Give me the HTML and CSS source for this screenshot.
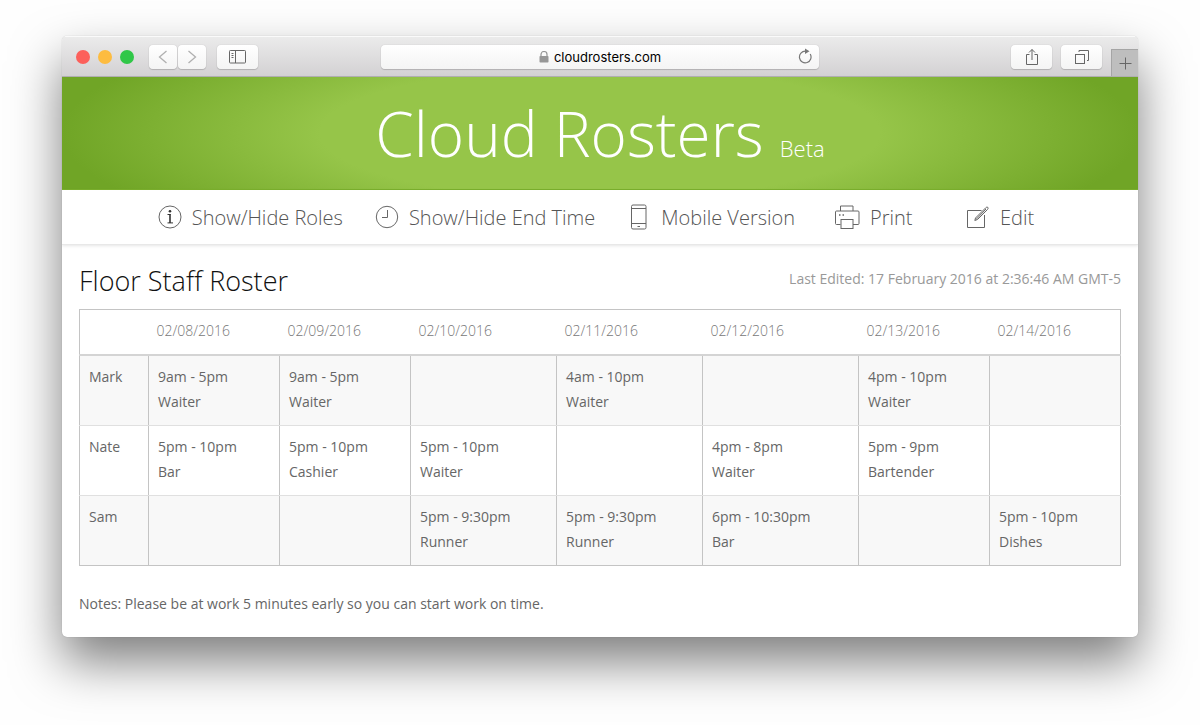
FILE: index.html
```html
<!DOCTYPE html>
<html lang="en">
<head>
<meta charset="utf-8">
<title>Cloud Rosters</title>
<link rel="stylesheet" href="styles.css">
</head>
<body>
<div class="window">
  <div class="toolbar">
    <div class="toolbar-side">
      <div class="lights">
        <span class="light light-close"></span>
        <span class="light light-min"></span>
        <span class="light light-max"></span>
      </div>
      <div class="history">
        <button class="tool tool-nav" type="button" aria-label="Back"><svg width="10" height="16" viewBox="0 0 10 16"><path d="M8.500 2L1.500 8L8.500 14" stroke="#b0b0b0" stroke-width="1.300"/></svg></button>
        <button class="tool tool-nav" type="button" aria-label="Forward"><svg width="10" height="16" viewBox="0 0 10 16"><path d="M1.500 2L8.500 8L1.500 14" stroke="#b0b0b0" stroke-width="1.300"/></svg></button>
      </div>
      <button class="tool" type="button" aria-label="Sidebar"><svg width="17" height="14" viewBox="0 0 17 14"><rect x="0.500" y="0.500" width="16" height="12.500" rx="0.800"/><path d="M6.500 0.500V13M2.500 3.500H4.500M2.500 5.500H4.500M2.500 7.500H4.500"/></svg></button>
    </div>
    <button class="address" type="button">
      <svg class="lock" width="10" height="12" viewBox="0 0 10 12"><path d="M2 6V3.500a3 3 0 0 1 6 0V6" stroke="#979797" stroke-width="1.200"/><rect x="0.500" y="5" width="9" height="6.500" rx="0.800" fill="#979797" stroke="none"/></svg>
      <span>cloudrosters.com</span>
      <svg class="reload" width="16" height="16" viewBox="0 0 16 16"><path d="M13.200 6A5.800 5.800 0 1 1 8.500 3.200" stroke-width="1.200"/><path d="M8 0.500L12.500 3.200L8 6Z" fill="#777" stroke="none"/></svg>
    </button>
    <div class="toolbar-side toolbar-end">
      <button class="tool" type="button" aria-label="Share"><svg width="14" height="18" viewBox="0 0 14 18"><path d="M4.500 6.500H1.500V16.500H12.500V6.500H9.500M7 12V1.500M4 4.500L7 1.500L10 4.500"/></svg></button>
      <button class="tool" type="button" aria-label="Show tabs"><svg width="16" height="16" viewBox="0 0 16 16"><rect x="1.500" y="5.500" width="9" height="9"/><path d="M5 3V1.500H14.500V11.500H13"/></svg></button>
      <button class="new-tab" type="button" aria-label="New tab"><svg width="13" height="13" viewBox="0 0 13 13"><path d="M6.500 0.500V12.500M0.500 6.500H12.500"/></svg></button>
    </div>
  </div>

  <header class="banner">
    <h1 class="brand">Cloud Rosters <small class="beta">Beta</small></h1>
  </header>

  <nav class="actions">
    <a class="action" href="#roles"><svg width="24" height="26" viewBox="0 0 24 26"><circle cx="12" cy="13" r="11"/><path d="M9.500 10.500H12.500M9.500 18.900H15" stroke-width="1" stroke="#333"/><path d="M12 10V19" stroke="#333" stroke-width="1.600"/><circle cx="12" cy="7.200" r="1.300" fill="#333" stroke="none"/></svg>Show/Hide Roles</a>
    <a class="action" href="#end"><svg width="24" height="26" viewBox="0 0 24 26"><circle cx="12" cy="13" r="10.700"/><path d="M12.500 6V13.500H7"/></svg>Show/Hide End Time</a>
    <a class="action" href="#mobile"><svg width="24" height="26" viewBox="0 0 24 26"><rect x="4.500" y="1" width="14.500" height="24" rx="1.500"/><path d="M4.500 4.500H19M4.500 19.500H19M10.500 22.500H13"/></svg>Mobile Version</a>
    <a class="action action-print" href="#print"><svg width="26" height="26" viewBox="0 0 26 26"><path d="M6.500 7V2H19V7M6.500 20.500H2.500Q1.500 20.500 1.500 19.500V8Q1.500 7 2.500 7H24Q25 7 25 8V19.500Q25 20.500 24 20.500H19"/><rect x="7" y="15.500" width="12" height="9"/><path d="M5 11H6.500M8.500 11H10" stroke-width="1.500"/></svg>Print</a>
    <a class="action" href="#edit"><svg width="24" height="26" viewBox="0 0 24 26"><path d="M15.500 6.500H1.500V23.500H18.500V11"/><path d="M8.800 16.500L9.500 14L19.500 4Q21 2.500 21.800 3.300T21.500 5.500L11.500 15.500Z"/><path d="M10 15.500L20 5"/></svg>Edit</a>
  </nav>

  <main class="content">
    <div class="heading">
      <h2 class="title">Floor Staff Roster</h2>
      <p class="edited">Last Edited: 17 February 2016 at 2:36:46 AM GMT-5</p>
    </div>
    <table class="roster">
      <colgroup><col class="col-name"><col class="col-s"><col class="col-s"><col class="col-m"><col class="col-m"><col class="col-l"><col class="col-s"><col class="col-s"></colgroup>
      <thead>
        <tr><th></th><th>02/08/2016</th><th>02/09/2016</th><th>02/10/2016</th><th>02/11/2016</th><th>02/12/2016</th><th>02/13/2016</th><th>02/14/2016</th></tr>
      </thead>
      <tbody>
        <tr><td>Mark</td><td>9am - 5pm<br>Waiter</td><td>9am - 5pm<br>Waiter</td><td></td><td>4am - 10pm<br>Waiter</td><td></td><td>4pm - 10pm<br>Waiter</td><td></td></tr>
        <tr><td>Nate</td><td>5pm - 10pm<br>Bar</td><td>5pm - 10pm<br>Cashier</td><td>5pm - 10pm<br>Waiter</td><td></td><td>4pm - 8pm<br>Waiter</td><td>5pm - 9pm<br>Bartender</td><td></td></tr>
        <tr><td>Sam</td><td></td><td></td><td>5pm - 9:30pm<br>Runner</td><td>5pm - 9:30pm<br>Runner</td><td>6pm - 10:30pm<br>Bar</td><td></td><td>5pm - 10pm<br>Dishes</td></tr>
      </tbody>
    </table>
    <p class="notes">Notes: Please be at work 5 minutes early so you can start work on time.</p>
  </main>
</div>
</body>
</html>
```

FILE: styles.css
```css
* { box-sizing: border-box; }

body {
  margin: 0;
  padding: 36px 62px 88px;
  background: #fefefe;
  font-family: "Open Sans", sans-serif;
  color: #666;
}

h1, h2, p { margin: 0; }

svg {
  flex: none;
  fill: none;
  stroke: #666;
  stroke-width: 1;
}

.window {
  border-radius: 5px;
  background: #fff;
  overflow: hidden;
  box-shadow: 0 0 1px rgba(0, 0, 0, 0.3), 0 25px 50px rgba(0, 0, 0, 0.5);
}

/* Browser toolbar */
.toolbar {
  display: grid;
  grid-template-columns: 1fr 438px 1fr;
  align-items: center;
  height: 41px;
  background: linear-gradient(#ebebeb, #d3d1d3);
  border-top: 1px solid #fafafa;
  border-bottom: 1px solid #b0aeb0;
}

.toolbar-side {
  display: flex;
  align-items: center;
  gap: 11px;
  height: 39px;
  padding-left: 14px;
}

.toolbar-end {
  justify-content: flex-end;
  gap: 9px;
}

.lights { display: flex; gap: 8px; margin-right: 4px; }

.light {
  width: 14px;
  height: 14px;
  border-radius: 50%;
}

.light-close { background: #fc605b; }
.light-min { background: #fdbc40; }
.light-max { background: #30c748; }

.history { display: flex; gap: 1px; }

.tool, .address {
  display: flex;
  align-items: center;
  justify-content: center;
  height: 24px;
  padding: 0;
  border: 0;
  border-radius: 4px;
  background: linear-gradient(#fff, #f4f4f4);
  box-shadow: 0 0 1px rgba(0, 0, 0, 0.25), 0 1px 1px rgba(0, 0, 0, 0.15);
}

.tool { width: 41px; }
.tool-nav { width: 28px; }

.address {
  position: relative;
  gap: 5px;
  font-family: Inter, sans-serif;
  font-size: 13px;
  color: #000;
}

.reload {
  position: absolute;
  right: 6px;
  top: 3px;
  stroke: #777;
}

.new-tab {
  display: flex;
  align-items: center;
  justify-content: center;
  align-self: flex-end;
  width: 27px;
  height: 27px;
  padding: 0;
  border: 1px solid #a5a5a5;
  border-width: 1px 0 0 1px;
  background: #bebebe;
}

/* Page banner */
.banner {
  display: flex;
  justify-content: center;
  align-items: center;
  height: 113px;
  padding-top: 14px;
  border-bottom: 1px solid #7bb02d;
  background: radial-gradient(ellipse 50% 114% at center, #96c549 52%, #70a526 100%);
}

.brand {
  font-size: 62px;
  font-weight: 300;
  line-height: 88px;
  color: #fff;
}

.beta { font-size: 22px; }

/* Actions */
.actions {
  display: flex;
  justify-content: center;
  gap: 32px;
  height: 55px;
  padding: 13px 8px 0 0;
  border-bottom: 1px solid #e8e8e8;
  box-shadow: 0 1px 3px rgba(0, 0, 0, 0.1);
}

.action {
  display: flex;
  align-items: center;
  gap: 10px;
  height: 28px;
  font-size: 20px;
  font-weight: 300;
  color: #555;
  text-decoration: none;
}

.action-print {
  min-width: 100px;
  margin-left: 7px;
}

/* Roster */
.content { padding: 16px 17px 21px; }

.heading {
  display: flex;
  justify-content: space-between;
  height: 48px;
}

.title {
  font-size: 27px;
  font-weight: 300;
  line-height: 40px;
  color: #111;
}

.edited {
  font-size: 14px;
  line-height: 36px;
  color: #999;
}

.roster {
  width: 100%;
  table-layout: fixed;
  border-collapse: collapse;
  border: 1px solid #c4c4c4;
  font-size: 14px;
  line-height: 25px;
}

.col-name { width: 69px; }
.col-s { width: 131px; }
.col-m { width: 146px; }
.col-l { width: 156px; }

.roster th {
  height: 45px;
  padding: 0 8px 2px;
  border-bottom: 2px solid #d4d4d4;
  font-weight: 300;
  text-align: left;
  color: #777;
}

.roster td {
  height: 70px;
  padding: 8px 9px 11px;
  vertical-align: top;
  border: 1px solid #c4c4c4;
  border-top-color: #e0e0e0;
}

.roster tbody tr + tr td { border-top-color: #e0e0e0; }
.roster tbody tr:not(:last-child) td { border-bottom-color: #e0e0e0; }

.roster tbody tr:nth-child(odd) { background: #f8f8f8; }

.notes {
  padding-top: 25px;
  font-size: 14px;
  line-height: 25px;
}
```
